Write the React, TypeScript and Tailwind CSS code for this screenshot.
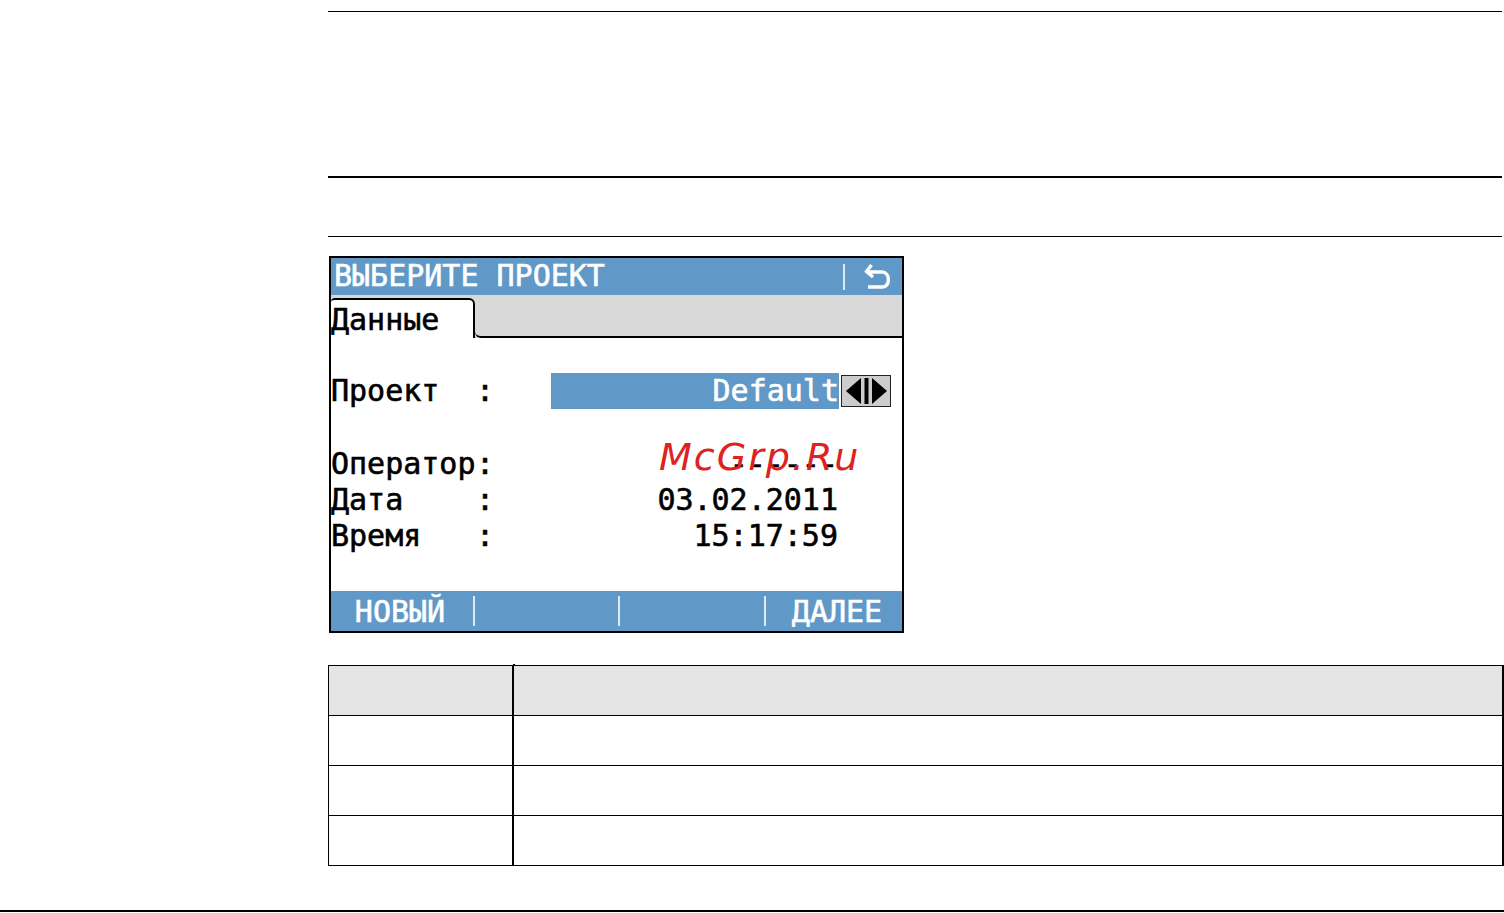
import React from "react";

const mono = "font-['DejaVu_Sans_Mono',monospace] text-[30px] leading-[36px] whitespace-pre [-webkit-text-stroke:0.6px]";

function Row({ label, value }: { label: string; value: string }) {
  return (
    <div className={`flex h-9 ${mono} text-black`}>
      <span className="w-[145px]">{label}</span>
      <span className="w-[18px]">:</span>
      <span className="w-[344px] text-right">{value}</span>
    </div>
  );
}

function TableRow({ head }: { head?: boolean }) {
  return (
    <div className={`grid grid-cols-[185px_1fr] h-[50px] border-b border-black ${head ? "bg-[#e4e4e4]" : "bg-white"}`}>
      <div className="border-r-2 border-black" />
      <div />
    </div>
  );
}

export default function App() {
  return (
    <div className="relative w-[1504px] h-[913px] bg-white overflow-hidden flex flex-col pl-[328px] pt-[11px]">
      <div className="h-px w-[1174px] bg-black" />
      <div className="h-0.5 w-[1174px] bg-black mt-[164px]" />
      <div className="h-px w-[1174px] bg-black mt-[58px]" />

      <div className="relative mt-[19px] ml-px w-[575px] h-[377px] border-2 border-black bg-white flex flex-col">
        <div className={`h-[37px] shrink-0 bg-[#6098c8] flex items-center text-white pl-[3px] ${mono}`}>
          <span className="flex-1 -mt-0.5">ВЫБЕРИТЕ ПРОЕКТ</span>
          <span className="w-[2px] h-[26px] bg-[#dfe9f3] mr-[19px]" />
          <svg width="26" height="26" viewBox="0 0 26 26" className="mr-[12px] -mt-0.5" fill="none" stroke="white" strokeWidth="3.4">
            <path d="M7.5 2 L2.5 8.5 L9 14" />
            <path d="M3 9 H18 C26 9 27 24 18 24 H4" />
          </svg>
        </div>

        <div className="h-[43px] shrink-0 bg-[#d8d8d8] flex">
          <div className={`mt-[3px] w-[144px] h-[40px] bg-white border-t-2 border-r-2 border-black rounded-tr-[6px] rounded-tl-[4px] text-black ${mono}`}>
            <span className="block mt-0.5">Данные</span>
          </div>
          <div className="flex-1 border-b-2 border-black rounded-bl-[6px]" />
        </div>

        <div className="flex flex-col flex-1 pt-[35px]">
          <div className={`flex h-9 ${mono} text-black`}>
            <span className="w-[145px]">Проект</span>
            <span className="w-[75px]">:</span>
            <span className="w-[288px] h-[36px] bg-[#6098c8] text-white text-right">Default</span>
            <div className="ml-0.5 mt-[2px] w-[50px] h-[32px] border-[1.5px] border-[#222] bg-[#cccccc] flex items-center justify-center">
              <svg width="47" height="26" viewBox="0 0 47 26" fill="black">
                <polygon points="3,13 18,0 18,26" />
                <rect x="21.5" y="0" width="4" height="26" />
                <polygon points="29,0 44,13 29,26" />
              </svg>
            </div>
          </div>

          <div className="mt-[37px]">
            <Row label="Оператор" value="------" />
            <Row label="Дата" value="03.02.2011" />
            <Row label="Время" value="15:17:59" />
          </div>

          <div className={`mt-auto h-10 bg-[#6098c8] text-white grid grid-cols-[144px_145px_146px_1fr] items-center ${mono}`}>
            <div className="h-[30px] border-r-2 border-[#dfe9f3] text-center leading-[32px] pr-1">НОВЫЙ</div>
            <div className="h-[30px] border-r-2 border-[#dfe9f3]" />
            <div className="h-[30px] border-r-2 border-[#dfe9f3]" />
            <div className="h-[30px] text-center leading-[32px] pl-1.5">ДАЛЕЕ</div>
          </div>
        </div>
      </div>

      <div className="relative mt-[32px] w-[1176px] border-t border-l border-r-2 border-black">
        <TableRow head />
        <TableRow />
        <TableRow />
        <TableRow />
        <div className="absolute left-[184px] -top-0.5 w-0.5 h-0.5 bg-black" />
      </div>

      <div className="h-0.5 w-[1504px] -ml-[328px] bg-black mt-[44px]" />

      <div className="absolute left-[659px] top-[432px] text-[#dd2222] italic font-['DejaVu_Sans',sans-serif] text-[38px] leading-[50px] tracking-[2px]">
        McGrp.Ru
      </div>
    </div>
  );
}
